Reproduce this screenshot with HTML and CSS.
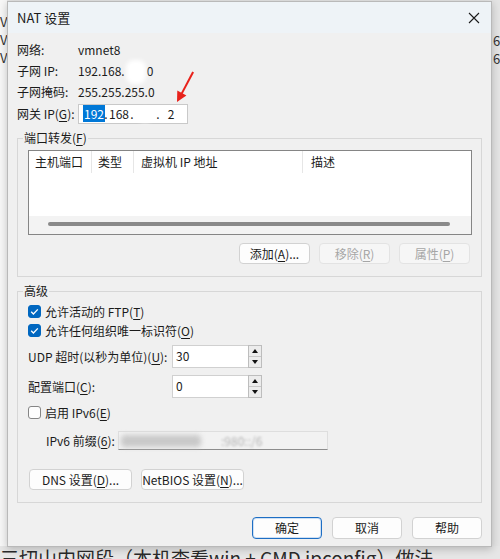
FILE: index.html
```html
<!DOCTYPE html>
<html lang="zh-CN">
<head>
    <meta charset="UTF-8">
    <title>NAT 设置</title>
    <link rel="stylesheet" href="styles.css">
</head>
<body>
    <!-- window behind the dialog -->
    <div class="desk">
        <div class="desk-top">
            <div class="desk-left">
                <div class="dl">V</div>
                <div class="dl">V</div>
                <div class="dl">V</div>
            </div>
            <div class="desk-right">
                <div class="dr">6</div>
                <div class="dr">6</div>
            </div>
        </div>
        <div class="desk-text">三切山内网段（本机查看win + CMD ipconfig）做法</div>
    </div>

    <div class="dialog">
        <div class="titlebar">
            <span class="title">NAT 设置</span>
            <span class="close">
                <svg width="12" height="12" viewBox="0 0 12 12"><path d="M1 1L11 11M11 1L1 11" stroke="#1a1a1a" stroke-width="1.1" fill="none"/></svg>
            </span>
        </div>

        <div class="content">
            <div class="info">
                <div class="irow"><span class="ilabel">网络:</span><span>vmnet8</span></div>
                <div class="irow"><span class="ilabel">子网 IP:</span><span>192.168.<i class="smudge"></i>0</span></div>
                <div class="irow"><span class="ilabel">子网掩码:</span><span>255.255.255.0</span></div>
                <div class="irow gw">
                    <span class="ilabel">网关 IP(<u>G</u>):</span>
                    <div class="ipbox">
                        <span class="seg"><span class="sel">192</span></span><span class="dot">.</span><span class="seg">168</span><span class="dot">.</span><span class="seg"><i class="smudge small"></i></span><span class="dot">.</span><span class="seg">2</span>
                    </div>
                </div>
            </div>

            <fieldset class="group pf">
                <legend>端口转发(<u>F</u>)</legend>
                <div class="list">
                    <div class="lhead">
                        <span class="col c1">主机端口</span>
                        <span class="col c2">类型</span>
                        <span class="col c3">虚拟机 IP 地址</span>
                        <span class="col c4">描述</span>
                    </div>
                    <div class="lbody"></div>
                    <div class="hscroll"><div class="thumb"></div></div>
                </div>
                <div class="btnrow">
                    <button class="btn">添加(<u>A</u>)...</button>
                    <button class="btn" disabled>移除(<u>R</u>)</button>
                    <button class="btn" disabled>属性(<u>P</u>)</button>
                </div>
            </fieldset>

            <fieldset class="group adv">
                <legend>高级</legend>
                <div class="check on">
                    <span class="box"><svg width="13" height="13" viewBox="0 0 13 13"><path d="M3.2 6.8L5.4 9L9.8 4.4" stroke="#fff" stroke-width="1.3" fill="none"/></svg></span>
                    <span>允许活动的 FTP(<u>T</u>)</span>
                </div>
                <div class="check on">
                    <span class="box"><svg width="13" height="13" viewBox="0 0 13 13"><path d="M3.2 6.8L5.4 9L9.8 4.4" stroke="#fff" stroke-width="1.3" fill="none"/></svg></span>
                    <span>允许任何组织唯一标识符(<u>O</u>)</span>
                </div>
                <div class="field udp">
                    <span class="flabel">UDP 超时(以秒为单位)(<u>U</u>):</span>
                    <div class="spin">
                        <span class="spin-val">30</span>
                        <span class="spin-btns"><span class="up"></span><span class="down"></span></span>
                    </div>
                </div>
                <div class="field port">
                    <span class="flabel">配置端口(<u>C</u>):</span>
                    <div class="spin">
                        <span class="spin-val">0</span>
                        <span class="spin-btns"><span class="up"></span><span class="down"></span></span>
                    </div>
                </div>
                <div class="check v6">
                    <span class="box"></span>
                    <span>启用 IPv6(<u>E</u>)</span>
                </div>
                <div class="field prefix">
                    <span class="plabel">IPv6 前缀(<u>6</u>):</span>
                    <div class="pbox"><span class="blob"></span><span class="blurtext">:980::/6</span></div>
                </div>
                <div class="btnrow left">
                    <button class="btn wide">DNS 设置(<u>D</u>)...</button>
                    <button class="btn wide">NetBIOS 设置(<u>N</u>)...</button>
                </div>
            </fieldset>

            <div class="footer">
                <button class="btn main">确定</button>
                <button class="btn">取消</button>
                <button class="btn">帮助</button>
            </div>
        </div>
    </div>

    <!-- red annotation arrow -->
    <svg class="arrow" width="30" height="40" viewBox="0 0 30 40">
        <path d="M22.2 3.6L24 4.4L12.6 26L10.8 25.2Z" fill="#e8221b"/>
        <path d="M7 34L7.3 22.6L16.4 27.5Z" fill="#e8221b"/>
    </svg>
</body>
</html>
```

FILE: styles.css
```css
*{
    margin: 0;
    padding: 0;
    box-sizing: border-box;
}
html, body{
    width: 500px;
    height: 559px;
    overflow: hidden;
}
body{
    font-family: "Noto Sans CJK SC", "Noto Sans", sans-serif;
    font-size: 12px;
    line-height: 16px;
    color: #1b1b1b;
    background: #e6e6e6;
    position: relative;
}
u{
    text-decoration: underline;
    text-underline-offset: 2px;
}

/* background window */
.desk{
    height: 559px;
    display: flex;
    flex-direction: column;
}
.desk-top{
    flex: 1;
    display: flex;
    justify-content: space-between;
}
.desk-left{
    width: 7px;
    background: #f7f7f7;
    font-size: 13px;
    line-height: 18px;
    padding-top: 13px;
    color: #333;
}
.desk-right{
    width: 8px;
    background: #e4e4e4;
    font-size: 13px;
    line-height: 18px;
    padding-top: 32px;
    color: #333;
}
.dr{
    padding-left: 1px;
}
.desk-text{
    height: 13px;
    font-size: 19px;
    line-height: 24px;
    color: #2a2a2a;
    white-space: nowrap;
}

/* dialog */
.dialog{
    position: absolute;
    left: 7px;
    top: 1px;
    width: 485px;
    height: 546px;
    background: #f0f0f0;
    border: 1px solid #b9b9b9;
    box-shadow: 0 2px 8px rgba(0,0,0,.22);
    display: flex;
    flex-direction: column;
}
.titlebar{
    height: 31px;
    background: #eef3f7;
    display: flex;
    align-items: center;
    justify-content: space-between;
    padding-left: 9px;
}
.title{
    font-size: 13px;
}
.close{
    width: 34px;
    height: 31px;
    display: flex;
    align-items: center;
    justify-content: center;
}
.content{
    padding: 6px 9px 0 9px;
    display: flex;
    flex-direction: column;
}

/* info rows */
.irow{
    display: flex;
    align-items: center;
    height: 21px;
}
.ilabel{
    width: 61px;
}
.gw{
    margin-top: 1px;
}
.smudge{
    display: inline-block;
    width: 20px;
    height: 24px;
    margin: -6px 1px;
    vertical-align: middle;
    background: #fff;
    border-radius: 8px;
    filter: blur(2px);
}
.smudge.small{
    width: 16px;
    height: 14px;
    margin: 0;
}
.ipbox{
    width: 110px;
    height: 20px;
    background: #fff;
    border: 1px solid #c9c9c9;
    display: flex;
    align-items: center;
    padding-left: 4px;
}
.seg{
    width: 20px;
    text-align: center;
}
.sel{
    background: #0078d7;
    color: #fff;
    padding: 0 1px;
}
.dot{
    width: 6px;
    text-align: center;
}

/* group boxes */
.group{
    border: 1px solid #d7d7d7;
    padding: 4px 9px 12px 10px;
}
.group legend{
    margin-left: -5px;
    padding: 0 1px;
    line-height: 16px;
}
.pf{
    margin-top: 6px;
}
.adv{
    margin-top: 6px;
    padding-top: 3px;
}

/* list */
.list{
    height: 85px;
    background: #fff;
    border: 1px solid #858585;
    display: flex;
    flex-direction: column;
}
.lhead{
    height: 22px;
    display: flex;
}
.col{
    padding-left: 6px;
    line-height: 22px;
    border-right: 1px solid #e6e6e6;
}
.c1{ width: 63px; }
.c2{ width: 42px; }
.c3{ width: 169px; padding-left: 7px; }
.c4{ flex: 1; border-right: 0; padding-left: 8px; }
.lbody{
    flex: 1;
}
.hscroll{
    height: 18px;
    background: #f3f3f3;
    padding: 6px 0 0 19px;
}
.thumb{
    width: 402px;
    height: 4px;
    border-radius: 2px;
    background: #8a8a8a;
}

/* buttons */
.btn{
    font-family: inherit;
    font-size: 12px;
    line-height: 16px;
    color: #1b1b1b;
    background: #fdfdfd;
    border: 1px solid #d2d2d2;
    border-radius: 4px;
    width: 71px;
    height: 21px;
}
.btn:disabled{
    background: #f6f6f6;
    border-color: #e3e3e3;
    color: #a6a6a6;
}
.btnrow{
    margin-top: 8px;
    display: flex;
    justify-content: flex-end;
    gap: 9px;
    padding-right: 2px;
}
.btnrow.left{
    justify-content: flex-start;
    margin-top: 19px;
    padding-left: 1px;
}
.btn.wide{
    width: 103px;
}
.footer{
    margin-top: 14px;
    display: flex;
    justify-content: flex-end;
    gap: 10px;
}
.footer .btn{
    width: 70px;
    height: 22px;
}
.btn.main{
    border-color: #1d6ec4;
    box-shadow: inset 0 0 0 1px #cfe0f3;
}

/* checkboxes */
.check{
    height: 19px;
    display: flex;
    align-items: center;
    gap: 4px;
}
.box{
    width: 13px;
    height: 13px;
    border-radius: 3px;
    border: 1px solid #858585;
    background: #fdfdfd;
    display: flex;
}
.check.on .box{
    background: #0067c0;
    border-color: #0067c0;
}
.check.on .box svg{
    margin: -1px;
}
.v6{
    margin-top: 5px;
}

/* fields */
.field{
    display: flex;
    align-items: center;
}
.udp{
    margin-top: 5px;
}
.port{
    margin-top: 7px;
}
.flabel{
    width: 144px;
}
.spin{
    width: 90px;
    height: 23px;
    display: flex;
}
.spin-val{
    flex: 1;
    background: #fff;
    border: 1px solid #d0d0d0;
    border-right: 0;
    padding: 2px 0 0 3px;
}
.spin-btns{
    width: 14px;
    border: 1px solid #bdbdbd;
    background: #ececec;
    display: flex;
    flex-direction: column;
}
.spin-btns span{
    flex: 1;
    display: flex;
    align-items: center;
    justify-content: center;
}
.spin-btns .up{
    border-bottom: 1px solid #c8c8c8;
}
.spin-btns .up::after{
    content: "";
    border-left: 3px solid transparent;
    border-right: 3px solid transparent;
    border-bottom: 4px solid #111;
}
.spin-btns .down::after{
    content: "";
    border-left: 3px solid transparent;
    border-right: 3px solid transparent;
    border-top: 4px solid #111;
}
.prefix{
    margin-top: 9px;
    padding-left: 18px;
}
.plabel{
    width: 72px;
}
.pbox{
    width: 210px;
    height: 19px;
    background: #f2f2f2;
    border: 1px solid #dedede;
    border-bottom-color: #8d8d8d;
    display: flex;
    align-items: center;
    gap: 6px;
    padding-left: 2px;
}
.blob{
    width: 80px;
    height: 12px;
    border-radius: 4px;
    background: #c9c9c9;
    filter: blur(2.5px);
}
.blurtext{
    margin-left: 14px;
    color: #b4b4b4;
    filter: blur(1.2px);
    white-space: nowrap;
}

/* annotation */
.arrow{
    position: absolute;
    left: 170px;
    top: 68px;
}
```
